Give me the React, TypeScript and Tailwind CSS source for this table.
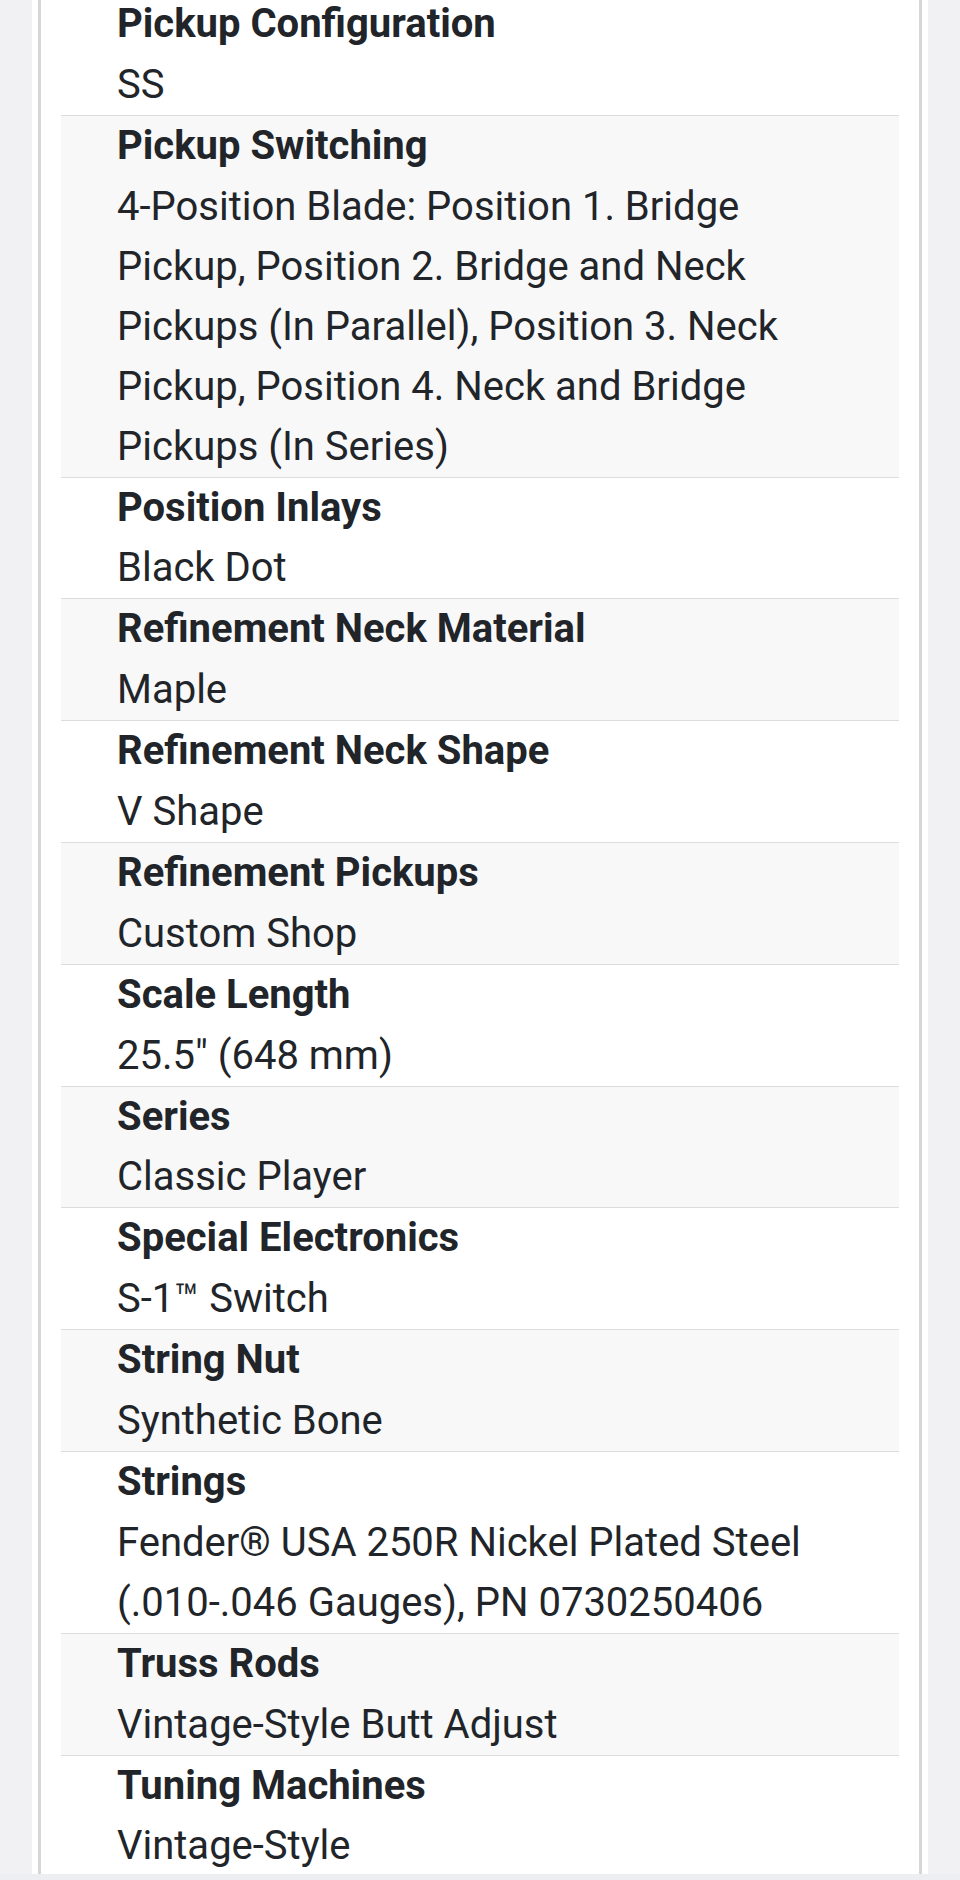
import React from "react";

const rows: { label: string; value: string }[] = [
  { label: "Pickup Configuration", value: "SS" },
  {
    label: "Pickup Switching",
    value:
      "4-Position Blade: Position 1. Bridge Pickup, Position 2. Bridge and Neck Pickups (In Parallel), Position 3. Neck Pickup, Position 4. Neck and Bridge Pickups (In Series)",
  },
  { label: "Position Inlays", value: "Black Dot" },
  { label: "Refinement Neck Material", value: "Maple" },
  { label: "Refinement Neck Shape", value: "V Shape" },
  { label: "Refinement Pickups", value: "Custom Shop" },
  { label: "Scale Length", value: '25.5" (648 mm)' },
  { label: "Series", value: "Classic Player" },
  { label: "Special Electronics", value: "S-1™ Switch" },
  { label: "String Nut", value: "Synthetic Bone" },
  {
    label: "Strings",
    value: "Fender® USA 250R Nickel Plated Steel (.010-.046 Gauges), PN 0730250406",
  },
  { label: "Truss Rods", value: "Vintage-Style Butt Adjust" },
  { label: "Tuning Machines", value: "Vintage-Style" },
];

export default function App() {
  return (
    <div
      className="w-[960px] h-[1880px] overflow-hidden bg-[#f1f1f3] flex flex-col"
      style={{ fontFamily: "Roboto, 'Noto Sans', sans-serif" }}
    >
      <div className="mx-[32px] h-[1874px] bg-white px-[6px] flex flex-col overflow-hidden">
        <div className="flex-1 border-x-[3px] border-[#d6d6d8] px-[20px] overflow-hidden">
          <div className="-mt-[6px]">
            {rows.map((r, i) => (
              <div
                key={r.label}
                className={`border-b border-[#dcdcde] pl-[56px] pr-[56px] text-[#212529] ${
                  i % 2 === 1 ? "bg-[#f8f8f9]" : "bg-white"
                }`}
              >
                <div className="text-[40px] leading-[60.8px] font-bold">{r.label}</div>
                <div className="text-[40px] leading-[60px] font-normal">{r.value}</div>
              </div>
            ))}
          </div>
        </div>
      </div>
      <div className="flex-1 bg-[#eceef2]" />
    </div>
  );
}
